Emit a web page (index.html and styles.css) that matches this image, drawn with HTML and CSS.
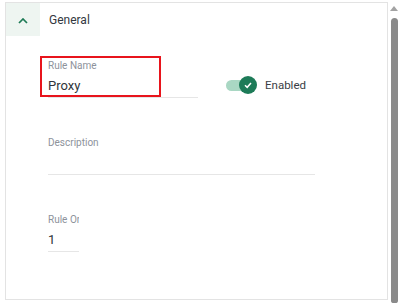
FILE: index.html
```html
<html>
<head>
<link rel="stylesheet" href="styles.css">
</head>
<body>
<div class="page">
  <div class="card">
    <div class="section-head">
      <div class="collapse-btn">
        <svg width="10" height="6" viewBox="0 0 10 6"><polyline points="1,5 5,1 9,5" fill="none" stroke="#1d7a55" stroke-width="1.7"/></svg>
      </div>
      <div class="section-title">General</div>
    </div>

    <div class="form">
      <div class="row">
        <div class="field field-name">
          <div class="label">Rule Name</div>
          <div class="value">Proxy</div>
        </div>
        <div class="switch">
          <div class="track"></div>
          <div class="knob">
            <svg width="10" height="10" viewBox="0 0 10 10"><polyline points="2,5.2 4.2,7.3 8,3" fill="none" stroke="#fff" stroke-width="1.5"/></svg>
          </div>
          <span class="switch-text">Enabled</span>
        </div>
        <div class="highlight"></div> <!-- annotation box over the name field -->
      </div>

      <div class="field field-desc">
        <div class="label">Description</div>
        <div class="value"></div>
      </div>

      <div class="field field-order">
        <div class="label">Rule Or</div>
        <div class="value">1</div>
      </div>
    </div>
  </div>

  <div class="scrollbar">
    <div class="arrow"></div>
    <div class="thumb"></div>
  </div>
</div>
</body>
</html>
```

FILE: styles.css
```css
body {
  margin: 0;
  font-family: Roboto, "Liberation Sans", sans-serif;
  background: #fff;
  overflow: hidden;
}

.page {
  display: flex;
  height: 303px;
}

/* the panel */
.card {
  margin: 2px 0 0 5px;
  width: 383px;
  height: 298px;
  box-sizing: border-box;
  border: 1px solid #e3e3e3;
}

.section-head {
  display: flex;
  align-items: center;
  height: 33px;
}

.collapse-btn {
  width: 34px;
  height: 33px;
  background: #eef5f1;
  display: flex;
  align-items: center;
  justify-content: center;
}

.collapse-btn svg {
  margin-top: 3px;
}

.section-title {
  margin-left: 9px;
  font-size: 12px;
  color: #333840;
}

.form {
  padding: 24px 0 0 42px;
}

.row {
  display: flex;
  position: relative;
}

.field {
  display: flex;
  flex-direction: column;
  border-bottom: 1px solid #e6e6e6;
  padding-bottom: 3px;
}

.label {
  font-size: 10px;
  line-height: 12px;
  color: #8d929b;
  white-space: nowrap;
  overflow: hidden;
}

.value {
  margin-top: 6px;
  height: 16px;
  font-size: 13px;
  line-height: 16px;
  color: #30343a;
}

.field-name {
  width: 150px;
}

.field-desc {
  width: 267px;
  margin-top: 39px;
}

.field-order {
  width: 31px;
  margin-top: 39px;
}

/* toggle */
.switch {
  display: flex;
  align-items: center;
  margin: 16px 0 0 28px;
  height: 18px;
}

.track {
  width: 24px;
  height: 11px;
  border-radius: 6px;
  background: #a9d7c3;
}

.knob {
  width: 18px;
  height: 18px;
  border-radius: 50%;
  background: #1d7b58;
  margin-left: -11px;
  display: flex;
  align-items: center;
  justify-content: center;
}

.switch-text {
  margin-left: 8px;
  font-size: 11.5px;
  color: #3a3e45;
}

.highlight {
  position: absolute;
  left: -8px;
  top: -4px;
  width: 121px;
  height: 41px;
  box-sizing: border-box;
  border: 2px solid #e8141c;
}

/* fake scrollbar */
.scrollbar {
  width: 12px;
  display: flex;
  flex-direction: column;
  align-items: center;
}

.arrow {
  margin-top: 6px;
  width: 0;
  height: 0;
  border-left: 4px solid transparent;
  border-right: 4px solid transparent;
  border-bottom: 5px solid #a3a3a3;
}

.thumb {
  margin-top: 7px;
  width: 7px;
  flex: 1;
  border-radius: 4px 4px 3px 3px;
  background: #8a8a8a;
}
```
